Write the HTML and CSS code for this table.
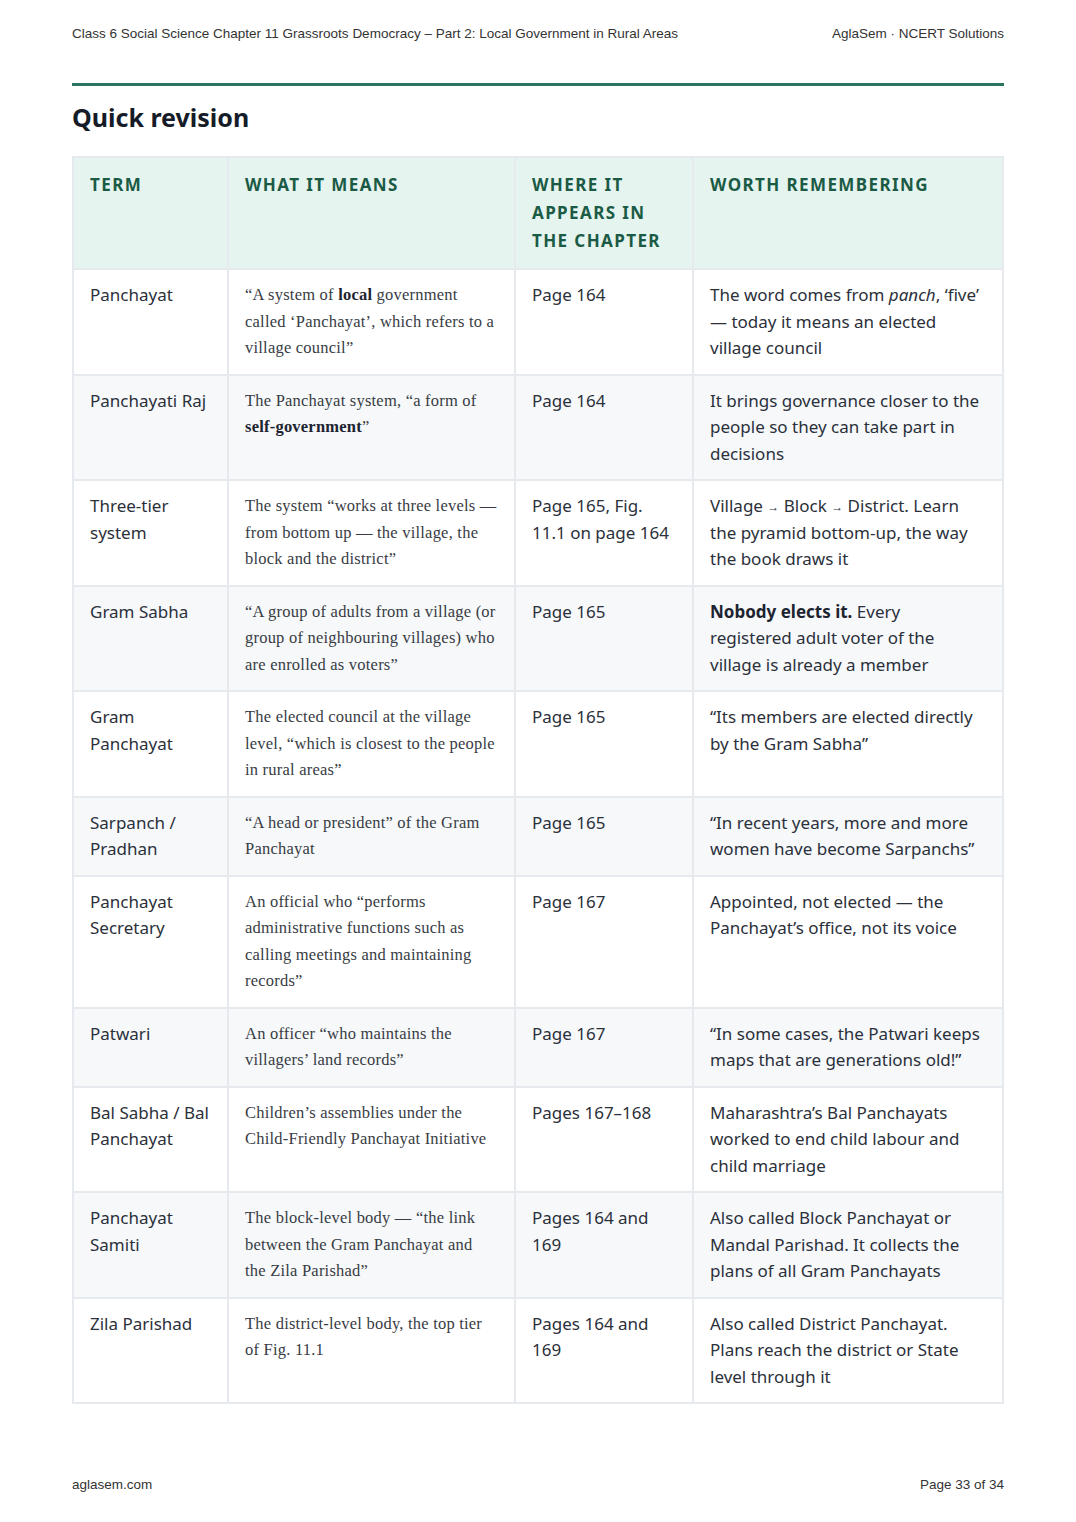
FILE: index.html
```html
<!DOCTYPE html>
<html lang="en">
<head>
<meta charset="utf-8">
<title>Quick revision</title>
<link rel="stylesheet" href="styles.css">
</head>
<body>
<div class="page">
  <header class="running-head">
    <span>Class 6 Social Science Chapter 11 Grassroots Democracy – Part 2: Local Government in Rural Areas</span>
    <span>AglaSem · NCERT Solutions</span>
  </header>
  <hr class="rule">
  <main>
    <h1 class="title">Quick revision</h1>
    <table class="rev">
      <colgroup>
        <col class="c1"><col class="c2"><col class="c3"><col class="c4">
      </colgroup>
      <thead>
        <tr>
          <th>Term</th>
          <th>What it means</th>
          <th>Where it appears in the chapter</th>
          <th>Worth remembering</th>
        </tr>
      </thead>
      <tbody>
        <tr>
          <td>Panchayat</td>
          <td class="q">“A system of <b>local</b> government called ‘Panchayat’, which refers to a village council”</td>
          <td>Page 164</td>
          <td>The word comes from <i>panch</i>, ‘five’ — today it means an elected village council</td>
        </tr>
        <tr>
          <td>Panchayati Raj</td>
          <td class="q">The Panchayat system, “a form of <b>self-government</b>”</td>
          <td>Page 164</td>
          <td>It brings governance closer to the people so they can take part in decisions</td>
        </tr>
        <tr>
          <td>Three-tier system</td>
          <td class="q">The system “works at three levels — from bottom up — the village, the block and the district”</td>
          <td>Page 165, Fig. 11.1 on page 164</td>
          <td>Village <span class="arr">→</span> Block <span class="arr">→</span> District. Learn the pyramid bottom-up, the way the book draws it</td>
        </tr>
        <tr>
          <td>Gram Sabha</td>
          <td class="q">“A group of adults from a village (or group of neighbouring villages) who are enrolled as voters”</td>
          <td>Page 165</td>
          <td><b>Nobody elects it.</b> Every registered adult voter of the village is already a member</td>
        </tr>
        <tr>
          <td>Gram Panchayat</td>
          <td class="q">The elected council at the village level, “which is closest to the people in rural areas”</td>
          <td>Page 165</td>
          <td>“Its members are elected directly by the Gram Sabha”</td>
        </tr>
        <tr>
          <td>Sarpanch / Pradhan</td>
          <td class="q">“A head or president” of the Gram Panchayat</td>
          <td>Page 165</td>
          <td>“In recent years, more and more women have become Sarpanchs”</td>
        </tr>
        <tr>
          <td>Panchayat Secretary</td>
          <td class="q">An official who “performs administrative functions such as calling meetings and maintaining records”</td>
          <td>Page 167</td>
          <td>Appointed, not elected — the Panchayat’s office, not its voice</td>
        </tr>
        <tr>
          <td>Patwari</td>
          <td class="q">An officer “who maintains the villagers’ land records”</td>
          <td>Page 167</td>
          <td>“In some cases, the Patwari keeps maps that are generations old!”</td>
        </tr>
        <tr>
          <td>Bal Sabha / Bal Panchayat</td>
          <td class="q">Children’s assemblies under the Child-Friendly Panchayat Initiative</td>
          <td>Pages 167–168</td>
          <td>Maharashtra’s Bal Panchayats worked to end child labour and child marriage</td>
        </tr>
        <tr>
          <td>Panchayat Samiti</td>
          <td class="q">The block-level body — “the link between the Gram Panchayat and the&nbsp;Zila Parishad”</td>
          <td>Pages 164 and 169</td>
          <td>Also called Block Panchayat or Mandal Parishad. It collects the plans of all Gram Panchayats</td>
        </tr>
        <tr>
          <td>Zila Parishad</td>
          <td class="q">The district-level body, the top tier of Fig. 11.1</td>
          <td>Pages 164 and 169</td>
          <td>Also called District Panchayat. Plans reach the district or State level through it</td>
        </tr>
      </tbody>
    </table>
  </main>
  <footer class="running-foot">
    <span>aglasem.com</span>
    <span>Page 33 of 34</span>
  </footer>
</div>
</body>
</html>
```

FILE: styles.css
```css
html, body {
  margin: 0;
  padding: 0;
  background: #ffffff;
}

.page {
  box-sizing: border-box;
  width: 1076px;
  height: 1522px;
  padding: 26px 72px 0 72px;
  display: flex;
  flex-direction: column;
  color: #2b303a;
}

.running-head,
.running-foot {
  display: flex;
  justify-content: space-between;
  font-family: "Liberation Sans", Arial, sans-serif;
  font-size: 13.5px;
  line-height: 16px;
  color: #333333;
}

.rule {
  margin: 41px 0 0 0;
  border: 0;
  height: 3px;
  background: #2a7560;
}

.title {
  margin: 14px 0 22px 0;
  font-family: "Noto Sans", "Open Sans", sans-serif;
  font-weight: 700;
  font-size: 25px;
  line-height: 34px;
  color: #151c28;
}

.rev {
  width: 930px;
  border-collapse: collapse;
  table-layout: fixed;
  font-family: "Noto Sans", "Open Sans", sans-serif;
  font-size: 17px;
  line-height: 26.5px;
  color: #2b303a;
}

.c1 { width: 155px; }
.c2 { width: 287px; }
.c3 { width: 178px; }
.c4 { width: 310px; }

.rev th,
.rev td {
  border: 2px solid #e6e9ed;
  text-align: left;
  vertical-align: top;
}

.rev th {
  padding: 13px 16px 13px 16px;
  background: #e5f4ee;
  color: #1b5a45;
  font-weight: 700;
  font-size: 17px;
  line-height: 28px;
  letter-spacing: 1.4px;
  text-transform: uppercase;
}

.rev td {
  padding: 12px 16px 12px 16px;
}

.rev td:last-child {
  padding-right: 17px;
}

.rev tbody tr:nth-child(even) td {
  background: #f6f8fa;
}

.rev td.q {
  font-family: "Liberation Serif", "Times New Roman", serif;
  font-size: 16.5px;
  letter-spacing: 0.22px;
  color: #383c44;
}

.rev td b {
  color: #1d2430;
}

.arr {
  font-size: 12px;
  line-height: 0;
  vertical-align: 1px;
}

main {
  flex: 0 0 auto;
}

.running-foot {
  margin-top: auto;
  margin-bottom: 29px;
}
```
